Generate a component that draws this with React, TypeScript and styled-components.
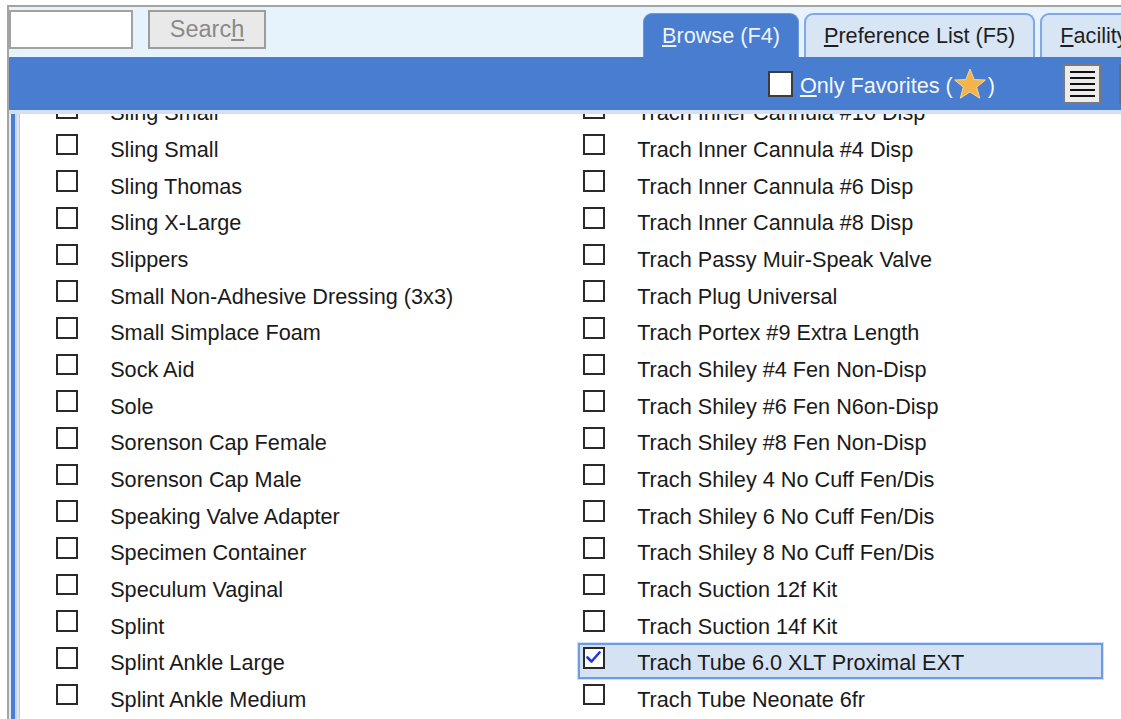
import React, { useLayoutEffect, useRef } from "react";
import styled, { createGlobalStyle } from "styled-components";

const GlobalStyle = createGlobalStyle`
  html, body { margin: 0; padding: 0; background: #ffffff; overflow: hidden; }
  body { font-family: "Liberation Sans", Arial, sans-serif; }
  * { box-sizing: border-box; }
`;

const BLUE = "#487dd0";
const FONT = "21.67px";

const Frame = styled.div`
  margin: 5px 0 0 7px;
  height: calc(100vh - 5px);
  border-top: 2px solid #a4a4a4;
  border-left: 2px solid #a4a4a4;
  display: flex;
  flex-direction: column;
  overflow: hidden;
`;

const Toolbar = styled.div`
  height: 50px;
  flex-shrink: 0;
  display: flex;
  align-items: flex-start;
  padding-top: 3px;
  background: #e6f3fd;
  overflow: hidden;
`;

const SearchInput = styled.input`
  width: 124px;
  height: 39px;
  flex-shrink: 0;
  border: 2px solid #a2a2a2;
  background: #ffffff;
  font-family: inherit;
  font-size: ${FONT};
  outline: none;
`;

const SearchButton = styled.button`
  margin-left: 15px;
  width: 118px;
  height: 39px;
  flex-shrink: 0;
  border: 2px solid #9c9c9c;
  background: #e9e9e9;
  color: #8a8a8a;
  font-family: inherit;
  font-size: 23.5px;
  padding: 0;
`;

const Key = styled.span`
  text-decoration: underline;
  text-underline-offset: 2px;
`;

const TabStrip = styled.div`
  margin-left: 377px;
  align-self: flex-end;
  display: flex;
  gap: 5px;
  flex-shrink: 0;
`;

const Tab = styled.div<{ $active?: boolean }>`
  height: 44px;
  padding: 0 18px;
  display: flex;
  align-items: center;
  white-space: nowrap;
  flex-shrink: 0;
  font-size: ${FONT};
  border-radius: 9px 9px 0 0;
  border: ${(p) => (p.$active ? `1px solid #6d98dc` : `2px solid #80a8e6`)};
  border-bottom: none;
  background: ${(p) => (p.$active ? BLUE : "#d8e5f5")};
  color: ${(p) => (p.$active ? "#eef3fb" : "#1e1e1e")};
`;

const Bar = styled.div`
  height: 53px;
  flex-shrink: 0;
  display: flex;
  align-items: center;
  justify-content: flex-end;
  background: ${BLUE};
`;

const Favorites = styled.label`
  display: flex;
  align-items: center;
  color: #f4f7fc;
  font-size: ${FONT};
  white-space: nowrap;
`;

const FavBox = styled.span`
  width: 25px;
  height: 26px;
  margin-right: 7px;
  border: 2px solid #3c3c3c;
  background: #ffffff;
  flex-shrink: 0;
`;

const FavText = styled.span`
  display: flex;
  align-items: center;
  padding-top: 4px;
`;

const Star = styled.svg`
  width: 34px;
  height: 34px;
  margin: -4px 1px 0 0;
  flex-shrink: 0;
`;

const MenuButton = styled.button`
  margin-left: 68px;
  width: 38px;
  height: 40px;
  flex-shrink: 0;
  border: 2px solid #7a7a7a;
  background: #ececec;
  padding: 0;
  display: flex;
  flex-direction: column;
  align-items: center;
  justify-content: center;
  gap: 4px;
`;

const MenuLine = styled.span`
  width: 25px;
  height: 2px;
  background: #111111;
`;

const ClippedEdge = styled.div`
  margin-left: 18px;
  width: 2px;
  height: 40px;
  overflow: hidden;
  flex-shrink: 0;
`;

const NextButton = styled.div`
  width: 38px;
  height: 40px;
  border: 2px solid #6e6e6e;
  background: #ececec;
`;

const ListPane = styled.div`
  flex: 1;
  min-height: 0;
  display: flex;
  border-top: 4px solid #d3e0f3;
`;

const PaneEdge = styled.div`
  width: 10px;
  flex-shrink: 0;
  background: linear-gradient(
    to right,
    #e1ebf8 0 2px,
    #4a7ed0 2px 6px,
    #c6d6ee 6px 8px,
    #e4e4e4 8px 10px
  );
`;

const Scroller = styled.div`
  flex: 1;
  min-width: 0;
  overflow: hidden;
  border-left: 1px solid #c8c8c8;
  padding-left: 31px;
  background: #ffffff;
`;

const Columns = styled.div`
  display: flex;
`;

const Column = styled.div`
  width: 527px;
  flex-shrink: 0;
  display: flex;
  flex-direction: column;
`;

const Row = styled.div<{ $selected?: boolean }>`
  width: 525px;
  height: 36.67px;
  flex-shrink: 0;
  display: flex;
  align-items: flex-start;
  padding-left: 3px;
  border: 2px solid ${(p) => (p.$selected ? "#6d9be4" : "transparent")};
  background: ${(p) => (p.$selected ? "#d5e2f4" : "transparent")};
  box-shadow: ${(p) => (p.$selected ? "0 0 0 1px rgba(120,160,230,0.35)" : "none")};
`;

const Box = styled.span`
  width: 21.67px;
  height: 21.67px;
  margin-top: 2.4px;
  flex-shrink: 0;
  border: 2px solid #2a2a2a;
  background: #ffffff;
  display: flex;
  align-items: center;
  justify-content: center;
`;

const Label = styled.span`
  margin-left: 32.5px;
  padding-top: 5.7px;
  line-height: 25px;
  font-size: ${FONT};
  color: #1a1a1a;
  white-space: nowrap;
`;

const leftItems = [
  "Sling Large",
  "Sling Small",
  "Sling Small",
  "Sling Thomas",
  "Sling X-Large",
  "Slippers",
  "Small Non-Adhesive Dressing (3x3)",
  "Small Simplace Foam",
  "Sock Aid",
  "Sole",
  "Sorenson Cap Female",
  "Sorenson Cap Male",
  "Speaking Valve Adapter",
  "Specimen Container",
  "Speculum Vaginal",
  "Splint",
  "Splint Ankle Large",
  "Splint Ankle Medium",
  "Splint Ankle Small",
];

const rightItems = [
  "Trach Holder Adult",
  "Trach Inner Cannula #10 Disp",
  "Trach Inner Cannula #4 Disp",
  "Trach Inner Cannula #6 Disp",
  "Trach Inner Cannula #8 Disp",
  "Trach Passy Muir-Speak Valve",
  "Trach Plug Universal",
  "Trach Portex #9 Extra Length",
  "Trach Shiley #4 Fen Non-Disp",
  "Trach Shiley #6 Fen N6on-Disp",
  "Trach Shiley #8 Fen Non-Disp",
  "Trach Shiley 4 No Cuff Fen/Dis",
  "Trach Shiley 6 No Cuff Fen/Dis",
  "Trach Shiley 8 No Cuff Fen/Dis",
  "Trach Suction 12f Kit",
  "Trach Suction 14f Kit",
  "Trach Tube 6.0 XLT Proximal EXT",
  "Trach Tube Neonate 6fr",
  "Trach Tube Pediatric 4.0",
];

const checked = new Set(["Trach Tube 6.0 XLT Proximal EXT"]);

function Check() {
  return (
    <svg width="15" height="13" viewBox="0 0 15 13">
      <path d="M1.5 6.5 L5.5 10.5 L13.5 1.5" fill="none" stroke="#1d34f0" strokeWidth="2.6" strokeLinecap="round" strokeLinejoin="round" />
    </svg>
  );
}

function ItemColumn({ items }: { items: string[] }) {
  return (
    <Column>
      {items.map((name, i) => {
        const on = checked.has(name);
        return (
          <Row key={i} $selected={on}>
            <Box>{on && <Check />}</Box>
            <Label>{name}</Label>
          </Row>
        );
      })}
    </Column>
  );
}

export default function App() {
  const scrollRef = useRef<HTMLDivElement>(null);

  useLayoutEffect(() => {
    if (scrollRef.current) scrollRef.current.scrollTop = 58;
  }, []);

  return (
    <>
      <GlobalStyle />
      <Frame>
        <Toolbar>
          <SearchInput type="text" />
          <SearchButton type="button" disabled>
            Searc<Key>h</Key>
          </SearchButton>
          <TabStrip>
            <Tab $active>
              <Key>B</Key>rowse (F4)
            </Tab>
            <Tab>
              <Key>P</Key>reference List (F5)
            </Tab>
            <Tab>
              <Key>F</Key>acility (F6)
            </Tab>
          </TabStrip>
        </Toolbar>
        <Bar>
          <Favorites>
            <FavBox />
            <FavText>
              <Key>O</Key>nly Favorites (
              <Star viewBox="0 0 34 34">
                <path
                  d="M17 2 L21.2 12.6 L32.4 13 L23.7 20.1 L26.7 31.2 L17 24.9 L7.3 31.2 L10.3 20.1 L1.6 13 L12.8 12.6 Z"
                  fill="#f3b54b"
                  stroke="#f8d595"
                  strokeWidth="1"
                  strokeLinejoin="round"
                />
              </Star>
              )
            </FavText>
          </Favorites>
          <MenuButton type="button" aria-label="Columns">
            <MenuLine />
            <MenuLine />
            <MenuLine />
            <MenuLine />
            <MenuLine />
          </MenuButton>
          <ClippedEdge>
            <NextButton />
          </ClippedEdge>
        </Bar>
        <ListPane>
          <PaneEdge />
          <Scroller ref={scrollRef}>
            <Columns>
              <ItemColumn items={leftItems} />
              <ItemColumn items={rightItems} />
            </Columns>
          </Scroller>
        </ListPane>
      </Frame>
    </>
  );
}
